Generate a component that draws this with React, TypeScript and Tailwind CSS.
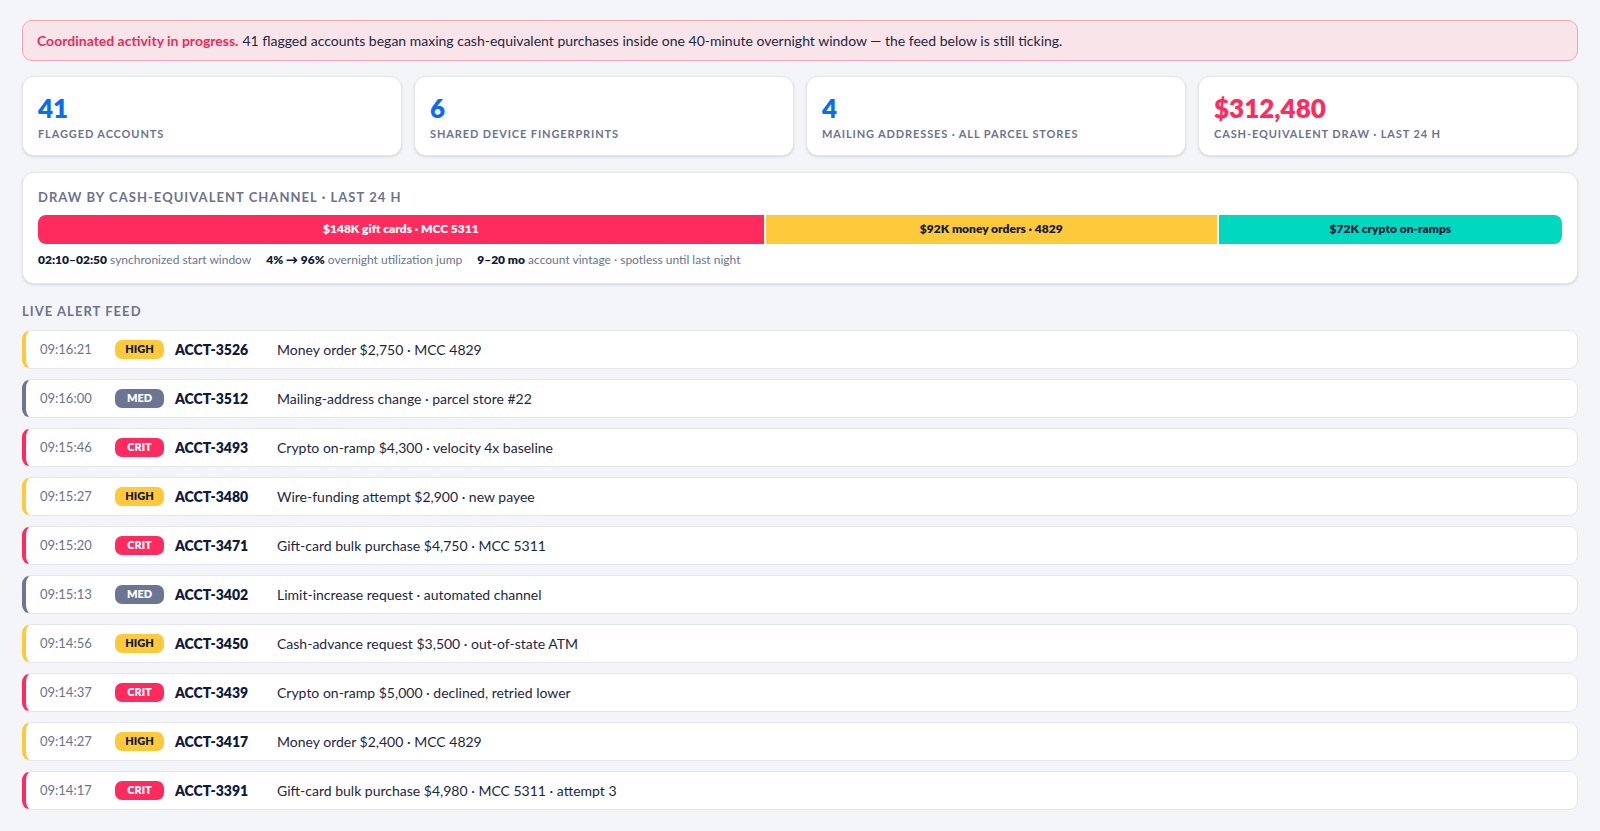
import React from "react";

const stats = [
  { v: "41", l: "FLAGGED ACCOUNTS", c: "text-[#0b6cf0]" },
  { v: "6", l: "SHARED DEVICE FINGERPRINTS", c: "text-[#0b6cf0]" },
  { v: "4", l: "MAILING ADDRESSES · ALL PARCEL STORES", c: "text-[#0b6cf0]" },
  { v: "$312,480", l: "CASH-EQUIVALENT DRAW · LAST 24 H", c: "text-[#ff2b5e]" },
];

type Sev = "HIGH" | "MED" | "CRIT";
const rows: [string, Sev, string, string][] = [
  ["09:16:21", "HIGH", "ACCT-3526", "Money order $2,750 · MCC 4829"],
  ["09:16:00", "MED", "ACCT-3512", "Mailing-address change · parcel store #22"],
  ["09:15:46", "CRIT", "ACCT-3493", "Crypto on-ramp $4,300 · velocity 4x baseline"],
  ["09:15:27", "HIGH", "ACCT-3480", "Wire-funding attempt $2,900 · new payee"],
  ["09:15:20", "CRIT", "ACCT-3471", "Gift-card bulk purchase $4,750 · MCC 5311"],
  ["09:15:13", "MED", "ACCT-3402", "Limit-increase request · automated channel"],
  ["09:14:56", "HIGH", "ACCT-3450", "Cash-advance request $3,500 · out-of-state ATM"],
  ["09:14:37", "CRIT", "ACCT-3439", "Crypto on-ramp $5,000 · declined, retried lower"],
  ["09:14:27", "HIGH", "ACCT-3417", "Money order $2,400 · MCC 4829"],
  ["09:14:17", "CRIT", "ACCT-3391", "Gift-card bulk purchase $4,980 · MCC 5311 · attempt 3"],
];

const sevStyle: Record<Sev, { border: string; badge: string }> = {
  HIGH: { border: "border-l-[#ffc93c]", badge: "bg-[#ffc93c] text-[#0f1b3d]" },
  MED: { border: "border-l-[#6b7594]", badge: "bg-[#6b7594] text-white" },
  CRIT: { border: "border-l-[#ff2b5e]", badge: "bg-[#ff2b5e] text-white" },
};

export default function App() {
  return (
    <div
      className="min-h-[831px] bg-[#f4f5f9] px-[22px] pt-[20px] pb-6 text-[#0f1b3d]"
      style={{ fontFamily: "Lato, 'Noto Sans', sans-serif" }}
    >
      <div className="rounded-[10px] border border-[#f3a3b8] bg-[#f9e4ea] px-[14px] h-[41px] flex items-center text-[14px] text-[#1e2742]">
        <span className="font-bold text-[#ee2a5b] mr-1">Coordinated activity in progress.</span>
        41 flagged accounts began maxing cash-equivalent purchases inside one 40-minute overnight window — the feed below is still ticking.
      </div>

      <div className="mt-[15px] grid grid-cols-4 gap-[12px]">
        {stats.map((s) => (
          <div key={s.l} className="h-[80px] rounded-[12px] border border-[#e3e6ee] bg-white px-[15px] pt-[16px] shadow-sm">
            <div className={`text-[26px] leading-[30px] font-extrabold ${s.c}`}>{s.v}</div>
            <div className="mt-[3px] text-[11px] font-bold tracking-[0.08em] text-[#6b7390]">{s.l}</div>
          </div>
        ))}
      </div>

      <div className="mt-[16px] rounded-[12px] border border-[#e3e6ee] bg-white px-[15px] pt-[15px] pb-[14px] shadow-sm">
        <div className="text-[13px] font-bold tracking-[0.08em] text-[#6b7390]">DRAW BY CASH-EQUIVALENT CHANNEL · LAST 24 H</div>
        <div className="mt-[7px] flex h-[29px] gap-[2px] overflow-hidden rounded-[8px] text-[12px] font-extrabold">
          <div className="flex grow-[148] basis-0 items-center justify-center bg-[#ff2b5e] text-white">$148K gift cards · MCC 5311</div>
          <div className="flex grow-[92] basis-0 items-center justify-center bg-[#ffc93c] text-[#0f1b3d]">$92K money orders · 4829</div>
          <div className="flex grow-[70] basis-0 items-center justify-center bg-[#00d8c0] text-[#0f1b3d]">$72K crypto on-ramps</div>
        </div>
        <div className="mt-[7px] flex gap-[15px] text-[12px] text-[#6b7390]">
          <span><b className="font-extrabold text-[#0f1b3d]">02:10–02:50</b> synchronized start window</span>
          <span><b className="font-extrabold text-[#0f1b3d]">4% → 96%</b> overnight utilization jump</span>
          <span><b className="font-extrabold text-[#0f1b3d]">9–20 mo</b> account vintage · spotless until last night</span>
        </div>
      </div>

      <div className="mt-[18px] text-[13px] font-bold tracking-[0.08em] text-[#6b7390]">LIVE ALERT FEED</div>

      <div className="mt-[9px] flex flex-col gap-[10px]">
        {rows.map(([t, s, a, d]) => (
          <div
            key={a}
            className={`flex h-[39px] items-center rounded-[9px] border border-[#e3e6ee] border-l-[4px] ${sevStyle[s].border} bg-white pl-[14px] text-[14px]`}
          >
            <span className="w-[75px] text-[13px] text-[#6b7390]">{t}</span>
            <span className={`flex h-[19px] w-[49px] items-center justify-center rounded-[7px] text-[11px] font-extrabold ${sevStyle[s].badge}`}>{s}</span>
            <span className="ml-[11px] w-[102px] font-extrabold text-[#0f1b3d]">{a}</span>
            <span className="text-[#1e2742]">{d}</span>
          </div>
        ))}
      </div>
    </div>
  );
}
